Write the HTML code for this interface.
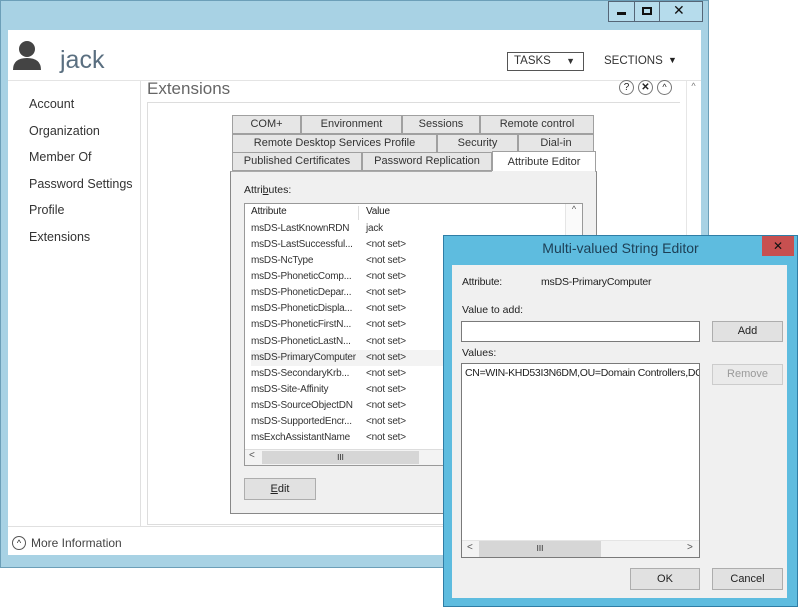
<!DOCTYPE html>
<html><head><meta charset="utf-8"><style>
*{box-sizing:border-box;margin:0;padding:0}
body{width:800px;height:608px;background:#fff;position:relative;overflow:hidden;font-family:"Liberation Sans",sans-serif;font-size:11px;color:#222}
.a{position:absolute}
.seg{font-family:"DejaVu Sans","Liberation Sans",sans-serif}
.tab{position:absolute;height:19px;border:1px solid #a0a0a0;background:#e6e6e6;text-align:center;line-height:17px;font-size:11px;color:#333}
.row{position:absolute;left:6px;height:16px;line-height:16px;font-size:10px;letter-spacing:-0.2px;color:#333;width:330px}
.row span{position:absolute;left:115px}
.btn{position:absolute;border:1px solid #adadad;background:#e1e1e1;text-align:center;font-size:11px;color:#222}
</style></head><body>
<div class="a" style="left:0;top:0;width:709px;height:568px;background:#a8d2e4;border:1px solid #6c9fb8"></div>
<div class="a" style="left:608px;top:1px;width:95px;height:21px;border:1px solid #567;background:#b6dcec"></div>
<div class="a" style="left:634px;top:1px;width:1px;height:21px;background:#567"></div>
<div class="a" style="left:659px;top:1px;width:1px;height:21px;background:#567"></div>
<div class="a" style="left:617px;top:12px;width:9px;height:3px;background:#111"></div>
<div class="a" style="left:642px;top:7px;width:10px;height:8px;border:2px solid #111"></div>
<div class="a seg" style="left:673px;top:3px;font-size:14px;font-weight:bold;color:#111">✕</div>
<div class="a" style="left:8px;top:30px;width:693px;height:525px;background:#fff"></div>
<svg class="a" style="left:12px;top:40px" width="32" height="32"><circle cx="15" cy="9" r="8" fill="#444"/><path d="M1 30 Q1 18 15 18 Q29 18 29 30Z" fill="#444"/></svg>
<div class="a" style="left:60px;top:46px;font-size:25px;color:#5a6f80">jack</div>
<div class="a" style="left:507px;top:52px;width:77px;height:19px;border:1px solid #555;font-size:11.5px;line-height:17px;padding-left:6px;color:#333">TASKS<span style="position:absolute;right:8px;font-size:9px">▼</span></div>
<div class="a" style="left:604px;top:55px;font-size:11.5px;color:#333">SECTIONS</div>
<div class="a" style="left:668px;top:55px;font-size:9px">▼</div>
<div class="a" style="left:8px;top:80px;width:693px;height:1px;background:#e4e4e4"></div>
<div class="a" style="left:140px;top:81px;width:1px;height:445px;background:#e0e0e0"></div>
<div class="a" style="left:29px;top:91px;font-size:12.5px;line-height:26.5px;color:#333">Account<br>Organization<br>Member Of<br>Password Settings<br>Profile<br>Extensions</div>
<div class="a" style="left:147px;top:79px;font-size:17px;color:#666">Extensions</div>
<div class="a" style="left:619px;top:80px;width:15px;height:15px;border:1px solid #777;border-radius:50%;font-size:10px;text-align:center;line-height:13px">?</div>
<div class="a" style="left:638px;top:80px;width:15px;height:15px;border:1px solid #777;border-radius:50%;font-size:10px;text-align:center;line-height:13px;font-weight:bold">✕</div>
<div class="a" style="left:657px;top:80px;width:15px;height:15px;border:1px solid #777;border-radius:50%;font-size:9px;text-align:center;line-height:13px">^</div>
<div class="a" style="left:686px;top:81px;width:14px;height:445px;border-left:1px solid #e6e6e6;font-size:9px;text-align:center;color:#777">^</div>
<div class="a" style="left:147px;top:102px;width:533px;height:1px;background:#ddd"></div>
<div class="a" style="left:147px;top:102px;width:1px;height:423px;background:#ddd"></div>
<div class="a" style="left:147px;top:524px;width:540px;height:1px;background:#ddd"></div>
<div class="a" style="left:8px;top:526px;width:693px;height:1px;background:#e0e0e0"></div>
<div class="a" style="left:12px;top:536px;width:14px;height:14px;border:1px solid #555;border-radius:50%;font-size:9px;text-align:center;line-height:13px">^</div>
<div class="a" style="left:31px;top:536px;font-size:12px;color:#444">More Information</div>
<div class="tab" style="left:232px;top:115px;width:69px">COM+</div>
<div class="tab" style="left:301px;top:115px;width:101px">Environment</div>
<div class="tab" style="left:402px;top:115px;width:78px">Sessions</div>
<div class="tab" style="left:480px;top:115px;width:114px">Remote control</div>
<div class="tab" style="left:232px;top:134px;width:205px">Remote Desktop Services Profile</div>
<div class="tab" style="left:437px;top:134px;width:81px">Security</div>
<div class="tab" style="left:518px;top:134px;width:76px">Dial-in</div>
<div class="tab" style="left:232px;top:152px;width:130px">Published Certificates</div>
<div class="tab" style="left:362px;top:152px;width:130px">Password Replication</div>
<div class="tab" style="left:492px;top:151px;width:104px;height:21px;background:#fff;border-bottom:none;line-height:20px">Attribute Editor</div>
<div class="a" style="left:230px;top:171px;width:367px;height:343px;border:1px solid #888;border-top-color:#aaa;background:#f0f0f0"></div>
<div class="a" style="left:492px;top:171px;width:103px;height:1px;background:#f0f0f0"></div>
<div class="a" style="left:244px;top:184px;font-size:10.5px">Attri<u>b</u>utes:</div>
<div class="a" style="left:244px;top:203px;width:339px;height:263px;border:1px solid #999;background:#fff">
 <div class="row" style="top:0;color:#222">Attribute<span>Value</span></div>
 <div class="a" style="left:113px;top:2px;width:1px;height:14px;background:#ddd"></div>
 <div class="a" style="left:320px;top:0;width:17px;height:245px;border-left:1px solid #e5e5e5;background:#fafafa;text-align:center;font-size:9px;color:#555">^</div>
 <div class="row" style="top:17px">msDS-LastKnownRDN<span>jack</span></div>
 <div class="row" style="top:33px">msDS-LastSuccessful...<span>&lt;not set&gt;</span></div>
 <div class="row" style="top:49px">msDS-NcType<span>&lt;not set&gt;</span></div>
 <div class="row" style="top:65px">msDS-PhoneticComp...<span>&lt;not set&gt;</span></div>
 <div class="row" style="top:81px">msDS-PhoneticDepar...<span>&lt;not set&gt;</span></div>
 <div class="row" style="top:97px">msDS-PhoneticDispla...<span>&lt;not set&gt;</span></div>
 <div class="row" style="top:113px">msDS-PhoneticFirstN...<span>&lt;not set&gt;</span></div>
 <div class="row" style="top:130px">msDS-PhoneticLastN...<span>&lt;not set&gt;</span></div>
 <div class="row" style="top:146px;background:#f3f3f3">msDS-PrimaryComputer<span>&lt;not set&gt;</span></div>
 <div class="row" style="top:162px">msDS-SecondaryKrb...<span>&lt;not set&gt;</span></div>
 <div class="row" style="top:178px">msDS-Site-Affinity<span>&lt;not set&gt;</span></div>
 <div class="row" style="top:194px">msDS-SourceObjectDN<span>&lt;not set&gt;</span></div>
 <div class="row" style="top:210px">msDS-SupportedEncr...<span>&lt;not set&gt;</span></div>
 <div class="row" style="top:226px">msExchAssistantName<span>&lt;not set&gt;</span></div>
 <div class="a" style="left:0;top:245px;width:337px;height:16px;border-top:1px solid #ddd;background:#f3f3f3"></div>
 <div class="a" style="left:4px;top:246px;font-size:10px;color:#555">&lt;</div>
 <div class="a" style="left:17px;top:247px;width:157px;height:13px;background:#d6d6d6;text-align:center;font-size:8px;line-height:13px">III</div>
</div>
<div class="btn" style="left:244px;top:478px;width:72px;height:22px;line-height:20px"><u>E</u>dit</div>
<div class="a" style="left:443px;top:235px;width:355px;height:372px;background:#5ebcdf;border:1px solid #2f7ea6"></div>
<div class="a" style="left:443px;top:240px;width:355px;text-align:center;font-size:14px;color:#1d3f55">Multi-valued String Editor</div>
<div class="a seg" style="left:762px;top:236px;width:32px;height:20px;background:#c75050;text-align:center;color:#111;font-size:12px;font-weight:bold;line-height:20px">✕</div>
<div class="a" style="left:452px;top:265px;width:335px;height:333px;background:#f0f0f0"></div>
<div class="a" style="left:462px;top:276px;font-size:10.5px;letter-spacing:-0.2px">Attribute:</div>
<div class="a" style="left:541px;top:276px;font-size:10.5px;letter-spacing:-0.2px">msDS-PrimaryComputer</div>
<div class="a" style="left:462px;top:304px;font-size:10.5px">Value to add:</div>
<div class="a" style="left:461px;top:321px;width:239px;height:21px;border:1px solid #7a7a7a;background:#fff"></div>
<div class="btn" style="left:712px;top:321px;width:71px;height:21px;line-height:19px">Add</div>
<div class="a" style="left:462px;top:347px;font-size:10.5px">Values:</div>
<div class="a" style="left:461px;top:363px;width:239px;height:195px;border:1px solid #7a7a7a;background:#fff;overflow:hidden">
 <div class="a" style="left:3px;top:3px;font-size:10.5px;letter-spacing:-0.3px;white-space:nowrap">CN=WIN-KHD53I3N6DM,OU=Domain Controllers,DC</div>
 <div class="a" style="left:0;top:176px;width:237px;height:17px;background:#f3f3f3;border-top:1px solid #e5e5e5"></div>
 <div class="a" style="left:5px;top:178px;font-size:10px;color:#555">&lt;</div>
 <div class="a" style="left:17px;top:177px;width:122px;height:16px;background:#d6d6d6;text-align:center;font-size:8px;line-height:16px">III</div>
 <div class="a" style="left:225px;top:178px;font-size:10px;color:#555">&gt;</div>
</div>
<div class="btn" style="left:712px;top:364px;width:71px;height:21px;line-height:19px;color:#9a9a9a;background:#eaeaea;border-color:#ccc">Remove</div>
<div class="btn" style="left:630px;top:568px;width:70px;height:22px;line-height:20px">OK</div>
<div class="btn" style="left:712px;top:568px;width:71px;height:22px;line-height:20px">Cancel</div>
</body></html>
